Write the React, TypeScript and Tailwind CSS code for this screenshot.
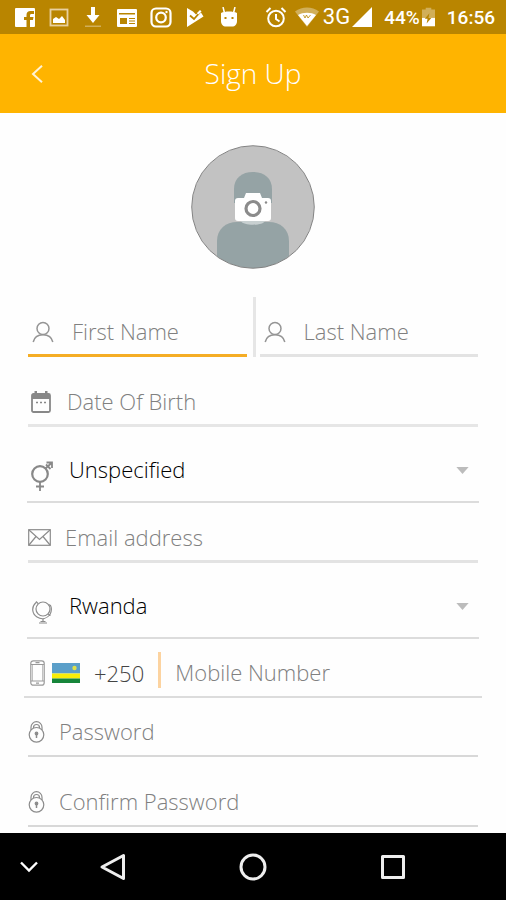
import type { ReactNode } from 'react';

type FieldProps = {
    id: string;
    label: string;
    icon: ReactNode;
    type?: string;
    className?: string;
    inputClassName?: string;
};

const INPUT = 'h-full min-w-0 flex-1 bg-transparent pb-0.5 text-[22px] font-light outline-none placeholder:text-[#808080] placeholder:opacity-100';

const Field = ({ id, label, icon, type = 'text', className = '', inputClassName = '' }: FieldProps) => (
    <div className={`flex h-12 items-center ${className}`}>
        <label htmlFor={id} aria-label={label} className="shrink-0">{icon}</label>
        <input id={id} type={type} placeholder={label} className={`${INPUT} ${inputClassName}`} />
    </div>
);

type SelectFieldProps = { id: string; label: string; icon: ReactNode; options: string[]; className?: string };

const SelectField = ({ id, label, icon, options, className = '' }: SelectFieldProps) => (
    <div className={`-mx-px flex h-16 items-center border-b-2 border-[#dcdcdc] pr-2.5 pl-1 ${className}`}>
        <label htmlFor={id} aria-label={label} className="shrink-0 pt-3">{icon}</label>
        <select id={id} className="h-full min-w-0 flex-1 appearance-none bg-transparent pb-0.5 pl-4 text-[22px] font-light text-black outline-none">
            {options.map(o => <option key={o}>{o}</option>)}
        </select>
        <svg className="pointer-events-none h-[7px] w-[13px]" viewBox="0 0 14 8" fill="#bcbcbc"><path d="M0 0h14L7 8z" /></svg>
    </div>
);

const PersonIcon = () => (
    <svg className="h-[22px] w-[22px]" viewBox="0 0 22 22" fill="none" stroke="#959595" strokeWidth="1.5">
        <circle cx="11" cy="7.5" r="6" />
        <path d="M1.2 21c1-4.7 5-7.3 9.800-7.3s8.800 2.600 9.800 7.300" />
    </svg>
);

const CalendarIcon = () => (
    <svg className="h-[22px] w-5" viewBox="0 0 20 22">
        <path d="M3.500 0h2.500v3H3.500zM14 0h2.500v3H14z" fill="#888" />
        <rect x="1" y="3" width="18" height="18" rx="1.5" fill="none" stroke="#888" strokeWidth="1.8" />
        <path d="M1 3h18v5H1z" fill="#888" />
        <path d="M5 11.500h2M9 11.500h2M13 11.500h2" stroke="#888" strokeWidth="1.5" />
    </svg>
);

const GenderIcon = () => (
    <svg className="h-[30px] w-[22px]" viewBox="0 0 22 30" fill="none" stroke="#888">
        <circle cx="9" cy="13" r="7.8" strokeWidth="2.2" />
        <path d="M14.500 7.500L21 1.500M15.500 1.500H21V7M15 3.500l4.500 4.500M9 21v9M5 25.500h8" strokeWidth="1.8" />
    </svg>
);

const MailIcon = () => (
    <svg className="h-[17px] w-[23px]" viewBox="0 0 23 17" fill="none" stroke="#8c8c8c" strokeWidth="1.2">
        <rect x="0.7" y="0.7" width="21.6" height="15.6" />
        <path d="M1 1l10.500 9.500L22 1M1 16l7-8.500M22 16l-7-8.500" />
    </svg>
);

const GlobeIcon = () => (
    <svg className="h-6 w-[22px]" viewBox="0 0 22 24" fill="none" stroke="#8c8c8c" strokeWidth="1.2">
        <circle cx="12" cy="9" r="7" />
        <path d="M5 1.500L7 3.500M5 2.500C0 7 1 14 6 17s10 1.500 13-2.500M17 14l2.500 1.500M17.500 4.500l2 1c1.500 3 1 6-.5 9M12 18.500V22M8 23h8M9.500 21.500h5" />
    </svg>
);

const PhoneIcon = () => (
    <svg className="h-[26px] w-[15px]" viewBox="0 0 15 26" fill="none" stroke="#999" strokeWidth="1.2">
        <rect x="0.8" y="0.8" width="13.4" height="24.4" rx="2.5" />
        <path d="M1 4.500h13M1 21h13M5.500 2.700h4M6 23.200h3" />
        <path d="M2.500 5v16M12.500 5v16" strokeWidth="0.6" />
    </svg>
);

const LockIcon = () => (
    <svg className="h-[22px] w-[17px]" viewBox="0 0 17 22" fill="none" stroke="#8c8c8c" strokeWidth="1.2">
        <circle cx="8.5" cy="13.8" r="7.3" />
        <path d="M3 9V6.200a5.500 5.500 0 0 1 11 0V9M5.500 7V6.500a3 3 0 0 1 6 0V7" />
        <circle cx="8.5" cy="12.5" r="1.3" fill="#8c8c8c" />
        <path d="M8.500 13v4" strokeWidth="1.5" />
    </svg>
);

const RwandaFlag = () => (
    <svg className="h-5 w-7" viewBox="0 0 28 20">
        <path d="M0 0h28v10.500H0z" fill="#5b9fc9" />
        <path d="M0 10.500h28v5H0z" fill="#f8ee08" />
        <path d="M0 15.500h28V20H0z" fill="#16853a" />
        <circle cx="22.5" cy="5" r="2.2" fill="#dfe04a" />
    </svg>
);

// notification icons on the left side of the status bar, one per slot
const notifications = [
    { name: 'facebook', art: <path fillRule="evenodd" d="M2 1h18a1 1 0 0 1 1 1v17a1 1 0 0 1-1 1h-4v-7h3l.5-3H16V8.500c0-1 .5-1.500 1.500-1.500H20V4h-3.500C14 4 12.500 5.500 12.500 8v2H10v3h2.500v7H2a1 1 0 0 1-1-1V2a1 1 0 0 1 1-1z" /> },
    { name: 'image', art: <><rect x="2.5" y="2.5" width="17" height="16" fill="none" stroke="#e8d0a0" strokeWidth="1.8" /><path d="M5 16v-4l3-2 3 2 3-3 3 4v3z" /></> },
    { name: 'download', art: <><path d="M9 0h4v8h4.500L11 16 4.500 8H9z" /><path d="M3 18.500h16V20H3z" opacity="0.35" /></> },
    { name: 'news', art: <path fillRule="evenodd" d="M2 2h18a1 1 0 0 1 1 1v16a1 1 0 0 1-1 1H2a1 1 0 0 1-1-1V3a1 1 0 0 1 1-1zM3 6v1.500h16V6zM4 11v6h7v-6zm9 0v1h6v-1zm0 2.500v1h6v-1zm0 2.500v1h6v-1z" /> },
    { name: 'instagram', art: <g fill="none" stroke="#fff" strokeWidth="2.2"><rect x="1.5" y="1.5" width="19" height="18" rx="4.5" /><circle cx="11" cy="10.5" r="4.8" /><path d="M15.500 5h2" /></g> },
    { name: 'play', art: <><path d="M3 1l6 3.500 3 3L16 4l3.500 5.500L3 20z" /><path d="M6 8.500l4 3.500 8-9" fill="none" stroke="#b98500" strokeWidth="1.8" /><path d="M13 6l3-3 1.500 1.500-3 3z" /></> },
    { name: 'android', art: <><path d="M3 6c4-2 12-2 16 0v8c0 3.500-2 5.500-5 5.500H8c-3 0-5-2-5-5.500z" /><path d="M6.500 6L5 0M15.500 6L17 0" stroke="#fff" strokeWidth="1.5" /><path d="M6.500 11h2M13.500 11h2" stroke="#b98500" strokeWidth="1.8" /></> },
];

const StatusBar = () => (
    <div className="flex h-[34px] items-center justify-between bg-[#b98500] pr-[11px] pl-2 font-['Roboto',sans-serif] text-white">
        <div className="flex items-center">
            {notifications.map(n => (
                <span key={n.name} className="flex w-[34px] justify-center">
                    <svg className="h-[21px] w-[22px]" viewBox="0 0 22 21" fill="#fff">{n.art}</svg>
                </span>
            ))}
        </div>
        <div className="flex items-center">
            <svg className="mr-2 h-[21px] w-[22px]" viewBox="0 0 22 21" fill="none" stroke="#fff" strokeWidth="2">
                <circle cx="11" cy="11.5" r="7.8" />
                <path d="M1.500 5l4-4M20.500 5l-4-4M11 7v5l3.500 2.500" />
            </svg>
            <svg className="mr-1 h-5 w-6" viewBox="0 0 24 20">
                <path d="M0 4.500C7-1 17-1 24 4.500L12 20z" fill="#fff" opacity="0.35" />
                <path d="M3 8c5-3 13-3 18 0L12 19z" fill="#fff" />
                <path d="M8.500 8l1.500 3 1.500-3 1.500 3 2.500-3" fill="none" stroke="#b98500" strokeWidth="0.8" />
            </svg>
            <span className="text-[22px] leading-none">3G</span>
            <svg className="mr-3 ml-0.5 h-5 w-5" viewBox="0 0 20 20" fill="#fff"><path d="M20 0v20H0z" /></svg>
            <span className="text-[19px] leading-none font-medium">44%</span>
            <svg className="mr-3 ml-0.5 h-5 w-[13px]" viewBox="0 0 14 20">
                <path d="M4 0h6v2h4v9H0V2h4z" fill="#fff" opacity="0.35" />
                <path d="M0 11h14v9H0z" fill="#fff" />
                <path d="M8 6l-5 6h3l-1 5 5-6H7z" fill="#b98500" />
            </svg>
            <span className="text-[19px] leading-none font-medium">16:56</span>
        </div>
    </div>
);

const Avatar = () => (
    <svg className="h-[124px] w-[124px]" viewBox="0 0 124 124">
        <defs><clipPath id="avatar-clip"><circle cx="62" cy="62" r="61" /></clipPath></defs>
        <g clipPath="url(#avatar-clip)">
            <path d="M0 0h124v124H0z" fill="#c2c2c2" />
            <path d="M43 58V44c0-11 8-17 19-17s19 6 19 17v14z" fill="#95a3a5" />
            <path d="M26 124V96c0-12 9-19 20-19h32c11 0 20 7 20 19v28z" fill="#95a3a5" />
            <path d="M50 76h24c-2 5-22 5-24 0z" fill="#c8d0d1" />
        </g>
        <circle cx="62" cy="62" r="61.3" fill="none" stroke="#777" strokeWidth="0.9" />
        <path d="M47 53h6l2-5h14l2 5h6a3 3 0 0 1 3 3v17a3 3 0 0 1-3 3H47a3 3 0 0 1-3-3V56a3 3 0 0 1 3-3z" fill="#fff" />
        <circle cx="62" cy="63.5" r="7" fill="#fff" stroke="#8b8b8b" strokeWidth="3.2" />
        <circle cx="75" cy="57.5" r="1.2" fill="#8b8b8b" />
    </svg>
);

const NavBar = () => (
    <nav className="relative flex h-[67px] shrink-0 items-center justify-center bg-black">
        <button type="button" aria-label="Hide keyboard" className="absolute left-5">
            <svg className="h-3 w-[18px]" viewBox="0 0 18 12" fill="none" stroke="#fff" strokeWidth="2.4"><path d="M1 1.500l8 8 8-8" /></svg>
        </button>
        <div className="flex items-center gap-[112px]">
            <button type="button" aria-label="Back">
                <svg className="h-7 w-7" viewBox="0 0 28 28" fill="none" stroke="#eee" strokeWidth="3" strokeLinejoin="round"><path d="M24.500 2.500v23L3 14z" /></svg>
            </button>
            <button type="button" aria-label="Home">
                <svg className="h-7 w-7" viewBox="0 0 28 28" fill="none" stroke="#eee" strokeWidth="3"><circle cx="14" cy="14" r="12" /></svg>
            </button>
            <button type="button" aria-label="Recent apps">
                <svg className="h-7 w-7" viewBox="0 0 28 28" fill="none" stroke="#eee" strokeWidth="3" strokeLinejoin="round"><path d="M3.500 3.500h21v21h-21z" /></svg>
            </button>
        </div>
    </nav>
);

export default function App() {
    return (
        <div className="flex min-h-screen flex-col bg-[#fefefe] font-['Open_Sans',sans-serif]">
            <StatusBar />
            <header className="relative flex h-[79px] items-center justify-center bg-[#ffb400]">
                <button type="button" aria-label="Back" className="absolute left-[31px]">
                    <svg className="h-[18px] w-3" viewBox="0 0 12 18" fill="none" stroke="#fff3d6" strokeWidth="2"><path d="M11 .8L2 9l9 8.200" /></svg>
                </button>
                <h1 className="pb-0.5 text-[28px] leading-none font-light text-white">Sign Up</h1>
            </header>

            <main className="flex-1 px-7 pt-8">
                <div className="flex justify-center">
                    <button type="button" aria-label="Add profile photo"><Avatar /></button>
                </div>

                <form>
                    <div className="mt-7 flex items-end">
                        <Field id="first-name" label="First Name" icon={<PersonIcon />} className="min-w-0 flex-1 border-b-3 border-[#f5ad25] pl-1" inputClassName="pl-[18px]" />
                        <div className="mr-1 ml-1.5 h-[60px] w-[3px] bg-[#e6e6e6]" />
                        <Field id="last-name" label="Last Name" icon={<PersonIcon />} className="min-w-0 flex-1 border-b-3 border-[#e3e3e3] pl-1" inputClassName="pl-[18px]" />
                    </div>
                    <Field id="birth-date" label="Date Of Birth" icon={<CalendarIcon />} className="mt-[22px] border-b-3 border-[#e6e6e6] pl-[3px]" inputClassName="pl-4" />
                    <SelectField id="gender" label="Gender" icon={<GenderIcon />} options={['Unspecified', 'Female', 'Male']} className="mt-3" />
                    <Field id="email" label="Email address" type="email" icon={<MailIcon />} className="mt-3 border-b-3 border-[#e3e3e3]" inputClassName="pl-3.5" />
                    <SelectField id="country" label="Country" icon={<GlobeIcon />} options={['Rwanda', 'Kenya', 'Uganda']} className="mt-3" />
                    <div className="-mx-1 mt-[11px] flex h-12 items-center border-b-2 border-[#dcdcdc] pl-1.5">
                        <label htmlFor="mobile" aria-label="Mobile Number"><PhoneIcon /></label>
                        <button type="button" className="flex items-center gap-3.5 pl-[7px] text-[22px] font-light text-[#444]">
                            <RwandaFlag />
                            +250
                        </button>
                        <div className="mr-3.5 mb-1.5 ml-3.5 h-9 w-[3px] bg-[#fcd3a0]" />
                        <input id="mobile" type="tel" placeholder="Mobile Number" className={INPUT} />
                    </div>
                    <Field id="password" label="Password" type="password" icon={<LockIcon />} className="mt-[11px] border-b-2 border-[#d8d8d8]" inputClassName="pl-3.5" />
                    <Field id="confirm-password" label="Confirm Password" type="password" icon={<LockIcon />} className="mt-[22px] border-b-2 border-[#d8d8d8]" inputClassName="pl-3.5" />
                </form>
            </main>

            <NavBar />
        </div>
    );
}
